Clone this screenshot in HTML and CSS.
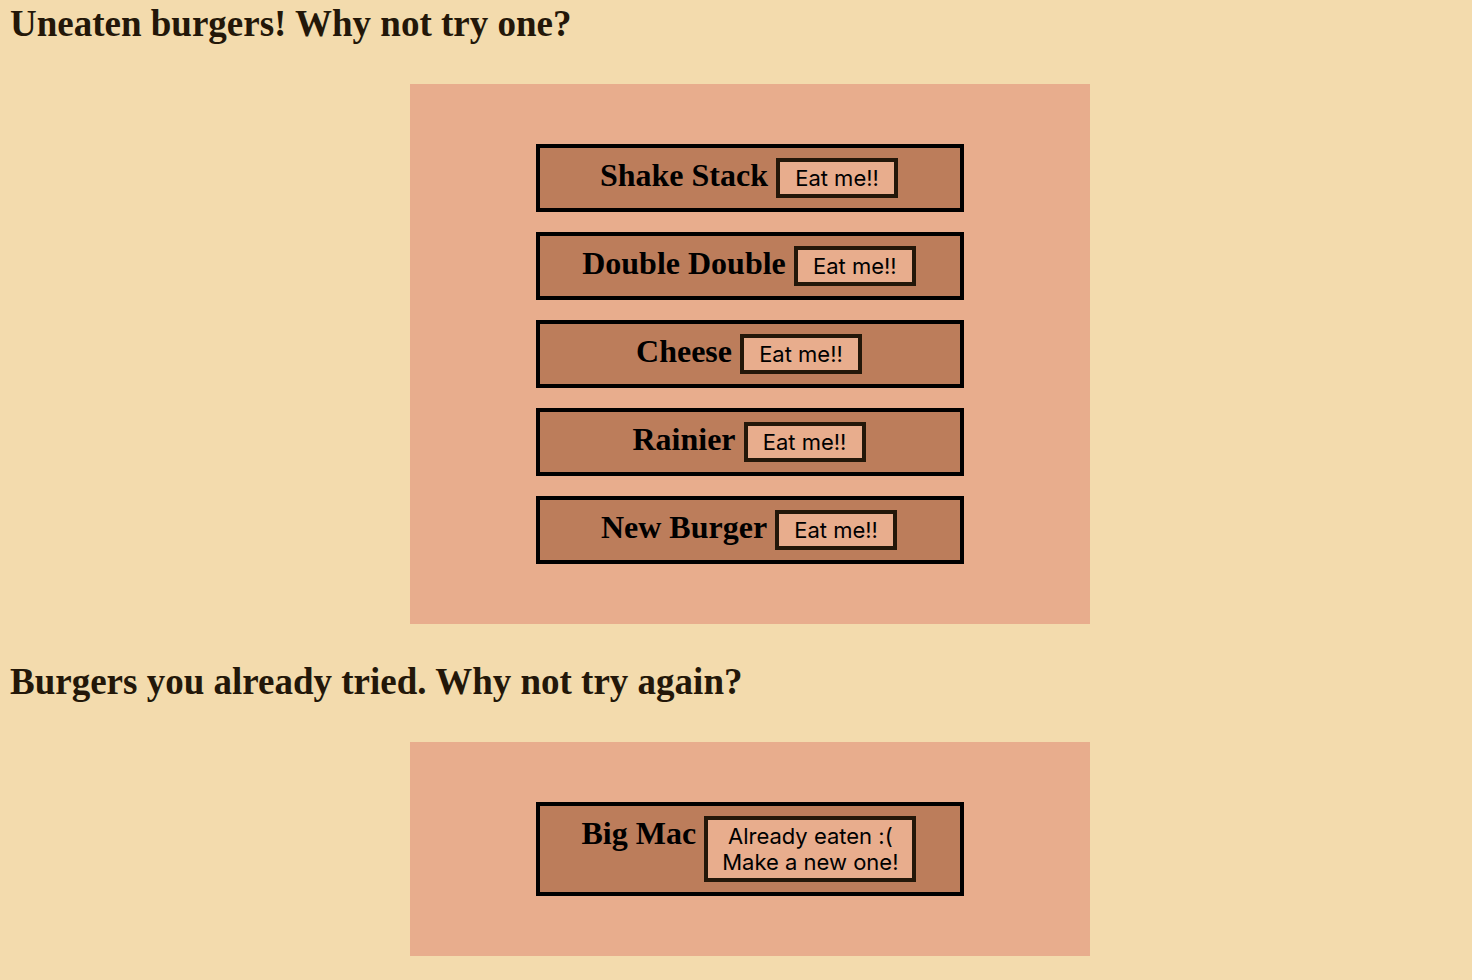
FILE: index.html
```
<!DOCTYPE html>
<html lang="en">
<head>
<meta charset="utf-8">
<title>Eat Da Burger</title>
<link rel="stylesheet" href="styles.css">
</head>
<body>
<main>
  <section>
    <h1>Uneaten burgers! Why not try one?</h1>
    <div class="shelf">
      <ul class="menu">
        <li class="burger"><h2>Shake Stack</h2><button type="button">Eat me!!</button></li>
        <li class="burger"><h2>Double Double</h2><button type="button">Eat me!!</button></li>
        <li class="burger"><h2>Cheese</h2><button type="button">Eat me!!</button></li>
        <li class="burger"><h2>Rainier</h2><button type="button">Eat me!!</button></li>
        <li class="burger"><h2>New Burger</h2><button type="button">Eat me!!</button></li>
      </ul>
    </div>
  </section>
  <section>
    <h1>Burgers you already tried. Why not try again?</h1>
    <div class="shelf">
      <ul class="menu">
        <li class="burger"><h2>Big Mac</h2><button type="button">Already eaten :(<br>Make a new one!</button></li>
      </ul>
    </div>
  </section>
</main>
</body>
</html>
```
FILE: styles.css
```
* {
  box-sizing: border-box;
}

body {
  margin: 0;
  background: #f3dbad;
  color: #231709;
  font-family: "Liberation Serif", "Times New Roman", serif;
}

main {
  display: flex;
  flex-direction: column;
  gap: 36px;
  padding: 2px 0 24px;
}

h1 {
  margin: 0 10px 38px;
  font-size: 37px;
  line-height: 44px;
}

.shelf {
  padding-left: 28px;
}

.menu {
  display: flex;
  flex-direction: column;
  gap: 20px;
  width: 680px;
  max-width: 100%;
  margin: 0 auto;
  padding: 60px 126px;
  list-style: none;
  background: #e8ad8d;
}

.burger {
  display: flex;
  justify-content: center;
  align-items: flex-start;
  gap: 8px;
  padding: 10px 12px 10px 10px;
  border: 4px solid #000;
  background: #bc7d5b;
  color: #000;
}

.burger h2 {
  margin: 0;
  font-size: 32px;
  line-height: 34px;
}

.burger button {
  min-width: 122px;
  padding: 3px 14px;
  border: 4px solid #231709;
  background: #e8ad8d;
  color: #000;
  font-family: Inter, "Noto Sans", sans-serif;
  font-size: 22px;
  line-height: 26px;
}
```
